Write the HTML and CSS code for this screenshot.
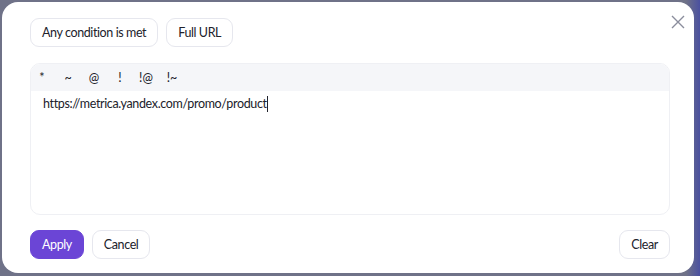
FILE: index.html
```html
<!DOCTYPE html>
<html lang="en">
<head>
    <meta charset="UTF-8">
    <title>URL condition</title>
    <link rel="stylesheet" href="styles.css">
</head>
<body>
    <div class="modal">
        <button class="close" type="button" aria-label="Close">
            <svg width="14" height="14" viewBox="0 0 14 14"><path d="M1 1L13 13M13 1L1 13" stroke="#8a8d9c" stroke-width="1.4" fill="none"/></svg>
        </button>
        <div class="top">
            <button class="btn">Any condition is met</button>
            <button class="btn">Full URL</button>
        </div>
        <div class="editor">
            <div class="tools">
                <span>*</span><span>~</span><span>@</span><span>!</span><span>!@</span><span>!~</span>
            </div>
            <div class="body">
                <span class="url">https://metrica.yandex.com/promo/product</span><span class="caret"></span>
            </div>
        </div>
        <div class="bottom">
            <button class="btn primary">Apply</button>
            <button class="btn">Cancel</button>
            <button class="btn right">Clear</button>
        </div>
    </div>
</body>
</html>
```

FILE: styles.css
```css
html,body{margin:0;padding:0;}
body{
    width:700px;
    height:276px;
    background:linear-gradient(90deg,#6f7288 0%,#6f7288 98%,#4a50a0 100%);
    font-family:Lato,"Noto Sans",sans-serif;
    color:#21222b;
    padding:2px 6px 3px 2px;
    box-sizing:border-box;
}
.modal{
    position:relative;
    height:100%;
    background:#fff;
    border-radius:16px;
    padding:16px 24px 14px 28px;
    box-sizing:border-box;
    display:flex;
    flex-direction:column;
}
.close{
    position:absolute;
    top:13px;
    right:9px;
    border:0;
    background:none;
    padding:0;
    width:14px;
    height:14px;
}
.btn{
    font-family:inherit;
    font-size:12.5px;
    letter-spacing:-0.4px;
    color:#21222b;
    background:#fff;
    border:1px solid #e6e7ee;
    border-radius:9px;
    height:29px;
    padding:0 11px;
    line-height:27px;
}
.top{display:flex;gap:8px;}
.editor{
    margin-top:16px;
    height:150px;
    border:1px solid #eff0f4;
    border-radius:10px;
    overflow:hidden;
    display:flex;
    flex-direction:column;
}
.tools{
    background:#f5f6f9;
    height:27px;
    display:flex;
    align-items:center;
    font-size:12.5px;
}
.tools span{width:26px;text-align:center;}
.tools span:first-child{margin-left:-2px;}
.body{
    padding:4px 12px;
    font-size:12.5px;
    letter-spacing:-0.35px;
    line-height:18px;
    display:flex;
    align-items:flex-start;
}
.caret{
    display:inline-block;
    width:1px;
    height:16px;
    margin-top:1px;
    background:#21222b;
}
.bottom{
    margin-top:auto;
    display:flex;
    gap:8px;
}
.primary{
    background:#6b45d6;
    border-color:#6b45d6;
    color:#fff;
}
.right{margin-left:auto;}
```
